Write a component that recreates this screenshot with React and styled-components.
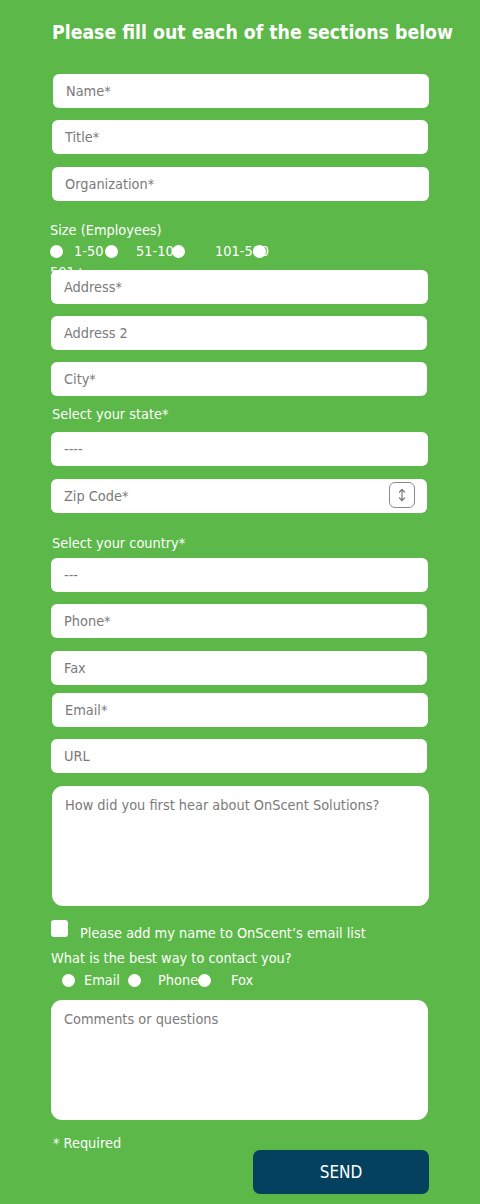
import React from 'react';
import styled, { createGlobalStyle } from 'styled-components';

const GlobalStyle = createGlobalStyle`
  html, body {
    margin: 0;
    padding: 0;
    background: #5cb848;
  }
  body {
    font-family: "DejaVu Sans", Tahoma, sans-serif;
    font-stretch: condensed;
  }
`;

const Page = styled.div`
  width: 480px;
  min-height: 1204px;
  background: #5cb848;
  padding: 20px 0 0 0;
  box-sizing: border-box;
`;

const Heading = styled.h2`
  margin: 0 0 28px 52px;
  color: #fff;
  font-size: 19.3px;
  font-weight: bold;
  line-height: 26px;
  white-space: nowrap;
`;

const Form = styled.form`
  display: flex;
  flex-direction: column;
`;

const Field = styled.input`
  position: relative;
  display: block;
  box-sizing: border-box;
  width: ${(p) => p.$w ?? 377}px;
  height: 34px;
  margin: ${(p) => p.$mt ?? 0}px 0 0 ${(p) => p.$x ?? 51}px;
  padding: 0 13px;
  border: none;
  border-radius: 6px;
  background: #fff;
  font-family: inherit;
  font-stretch: condensed;
  font-size: 14.4px;
  color: #333;
  outline: none;
  &::placeholder {
    color: #7a7a7a;
  }
`;

const ZipWrap = styled.div`
  position: relative;
  width: 376px;
  margin: 13px 0 0 51px;
`;

const Spinner = styled.span`
  position: absolute;
  right: 12px;
  top: 3px;
  width: 26px;
  height: 26px;
  box-sizing: border-box;
  border: 1px solid #8a8a8a;
  border-radius: 6px;
  display: flex;
  align-items: center;
  justify-content: center;
`;

const Area = styled.textarea`
  position: relative;
  display: block;
  box-sizing: border-box;
  width: 377px;
  height: 120px;
  margin: ${(p) => p.$mt ?? 0}px 0 0 ${(p) => p.$x ?? 51}px;
  padding: 9px 13px;
  border: none;
  border-radius: 11px;
  background: #fff;
  font-family: inherit;
  font-stretch: condensed;
  font-size: 14.4px;
  line-height: 20px;
  resize: none;
  outline: none;
  &::placeholder {
    color: #7a7a7a;
  }
`;

const Label = styled.div`
  color: #fff;
  font-size: 14.4px;
  line-height: 18px;
  margin: ${(p) => p.$mt ?? 0}px 0 0 ${(p) => p.$x ?? 51}px;
  white-space: nowrap;
`;

const RadioRow = styled.div`
  display: flex;
  flex-wrap: wrap;
  align-items: center;
  align-content: flex-start;
  width: 240px;
  margin: ${(p) => p.$mt ?? 0}px 0 0 ${(p) => p.$x ?? 50}px;
  height: ${(p) => p.$h || 'auto'};
  color: #fff;
  font-size: 14.4px;
  line-height: 18px;
`;

const Dot = styled.span`
  flex: none;
  width: 13px;
  height: 13px;
  border-radius: 50%;
  background: #fff;
  position: relative;
`;

const OptText = styled.span`
  flex: none;
  width: ${(p) => p.$w}px;
  margin-left: ${(p) => p.$gap}px;
  white-space: nowrap;
`;

const Wrapped = styled.span`
  flex: 0 0 100%;
  margin-top: 4px;
  line-height: 16px;
`;

const CheckRow = styled.label`
  display: flex;
  align-items: flex-start;
  margin: 14px 0 0 51px;
  color: #fff;
  font-size: 14.4px;
  line-height: 18px;
`;

const Box = styled.span`
  width: 17px;
  height: 17px;
  border-radius: 3px;
  background: #fff;
  flex: none;
`;

const CheckText = styled.span`
  margin: 4px 0 0 12px;
`;

const Footer = styled.div`
  display: flex;
  align-items: flex-start;
  justify-content: space-between;
  width: 376px;
  margin: 14px 0 0 53px;
`;

const Required = styled.div`
  color: #fff;
  font-size: 14.4px;
  line-height: 18px;
`;

const SendButton = styled.button`
  margin-top: 16px;
  width: 176px;
  height: 44px;
  border: none;
  border-radius: 7px;
  background: #03415e;
  color: #fff;
  font-family: inherit;
  font-stretch: condensed;
  font-size: 17px;
  cursor: pointer;
`;

function ArrowsIcon() {
  return (
    <svg width="10" height="14" viewBox="0 0 10 14" fill="none" stroke="#777" strokeWidth="1.2" strokeLinecap="round" strokeLinejoin="round">
      <path d="M5 1.5v11" />
      <path d="M2.5 4l2.5-2.5 2.5 2.5" />
      <path d="M2.5 10l2.5 2.5 2.5-2.5" />
    </svg>
  );
}

export default function App() {
  return (
    <Page>
      <GlobalStyle />
      <Heading>Please fill out each of the sections below</Heading>
      <Form onSubmit={(e) => e.preventDefault()}>
        <Field $x={53} $w={376} placeholder="Name*" />
        <Field $x={52} $w={376} $mt={12} placeholder="Title*" />
        <Field $x={52} $mt={13} placeholder="Organization*" />

        <Label $x={50} $mt={20}>Size (Employees)</Label>
        <RadioRow $mt={3} $h="20px">
          <Dot />
          <OptText $gap={11} $w={31}>1-50</OptText>
          <Dot />
          <OptText $gap={18} $w={36}>51-100</OptText>
          <Dot />
          <OptText $gap={30} $w={38}>101-500</OptText>
          <Dot />
          <Wrapped>501+</Wrapped>
        </RadioRow>

        <Field $mt={8} placeholder="Address*" />
        <Field $w={376} $mt={12} placeholder="Address 2" />
        <Field $w={376} $mt={12} placeholder="City*" />
        <Label $x={52} $mt={9}>Select your state*</Label>
        <Field $mt={9} placeholder="----" />
        <ZipWrap>
          <Field $x={0} $w={376} placeholder="Zip Code*" />
          <Spinner>
            <ArrowsIcon />
          </Spinner>
        </ZipWrap>
        <Label $x={52} $mt={21}>Select your country*</Label>
        <Field $mt={6} placeholder="---" />
        <Field $w={376} $mt={12} placeholder="Phone*" />
        <Field $w={376} $mt={13} placeholder="Fax" />
        <Field $x={52} $w={376} $mt={8} placeholder="Email*" />
        <Field $w={376} $mt={12} placeholder="URL" />
        <Area $x={52} $mt={13} placeholder="How did you first hear about OnScent Solutions?" />

        <CheckRow>
          <Box />
          <CheckText>Please add my name to OnScent’s email list</CheckText>
        </CheckRow>
        <Label $x={51} $mt={7}>What is the best way to contact you?</Label>
        <RadioRow $x={62} $mt={4}>
          <Dot />
          <OptText $gap={9} $w={44}>Email</OptText>
          <Dot />
          <OptText $gap={17} $w={40}>Phone</OptText>
          <Dot />
          <OptText $gap={20} $w={40}>Fox</OptText>
        </RadioRow>
        <Area $mt={11} placeholder="Comments or questions" />

        <Footer>
          <Required>* Required</Required>
          <SendButton type="submit">SEND</SendButton>
        </Footer>
      </Form>
    </Page>
  );
}
